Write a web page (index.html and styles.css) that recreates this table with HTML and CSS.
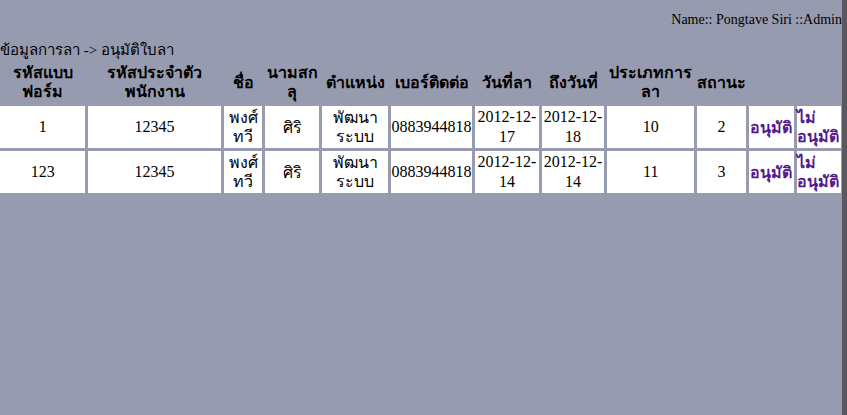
FILE: index.html
```html
<!DOCTYPE html>
<html>
<head>
<meta charset="utf-8">
<link rel="stylesheet" href="styles.css">
</head>
<body>
<div class="page">
  <div class="main">
    <div class="user">Name:: Pongtave Siri ::Admin</div>
    <div class="crumb">ข้อมูลการลา -&gt; อนุมัติใบลา</div>
    <table class="grid">
      <thead>
        <tr>
          <th class="c1">รหัสแบบ<br>ฟอร์ม</th>
          <th class="c2">รหัสประจำตัว<br>พนักงาน</th>
          <th class="c3">ชื่อ</th>
          <th class="c4">นามสก<br>ลุ</th>
          <th class="c5">ตำแหน่ง</th>
          <th class="c6">เบอร์ติดต่อ</th>
          <th class="c7">วันที่ลา</th>
          <th class="c8">ถึงวันที่</th>
          <th class="c9">ประเภทการ<br>ลา</th>
          <th class="c10">สถานะ</th>
          <th class="c11"></th>
          <th class="c12"></th>
        </tr>
      </thead>
      <tbody>
        <tr>
          <td>1</td>
          <td>12345</td>
          <td class="th">พงศ์<br>ทวี</td>
          <td class="th">ศิริ</td>
          <td class="th">พัฒนา<br>ระบบ</td>
          <td>0883944818</td>
          <td>2012-12-<br>17</td>
          <td>2012-12-<br>18</td>
          <td>10</td>
          <td>2</td>
          <td class="act"><a href="#">อนุมัติ</a></td>
          <td class="act left"><a href="#">ไม่<br>อนุมัติ</a></td>
        </tr>
        <tr>
          <td>123</td>
          <td>12345</td>
          <td class="th">พงศ์<br>ทวี</td>
          <td class="th">ศิริ</td>
          <td class="th">พัฒนา<br>ระบบ</td>
          <td>0883944818</td>
          <td>2012-12-<br>14</td>
          <td>2012-12-<br>14</td>
          <td>11</td>
          <td>3</td>
          <td class="act"><a href="#">อนุมัติ</a></td>
          <td class="act left"><a href="#">ไม่<br>อนุมัติ</a></td>
        </tr>
      </tbody>
    </table>
  </div>
  <div class="edge"></div>
</div>
</body>
</html>
```
FILE: styles.css
```css
html, body {
  margin: 0;
  padding: 0;
  height: 100%;
}
body {
  background: #979bb0;
  font-family: "Liberation Serif", "Noto Sans", "DejaVu Sans", serif;
  font-size: 16px;
  color: #000;
}
.page {
  display: flex;
  height: 100%;
}
.main {
  flex: 1;
  min-width: 0;
}
.edge {
  width: 5px;
  background: #58585e;
}
.user {
  text-align: right;
  font-size: 14px;
  padding-top: 12px;
  height: 28px;
  line-height: 16px;
}
.crumb {
  font-size: 15px;
  line-height: 20px;
  height: 20px;
}
.grid {
  border-collapse: separate;
  border-spacing: 3px;
  margin: -1px -3px 0 -3px;
  width: calc(100% + 5px);
}
.grid th {
  font-size: 16px;
  font-weight: bold;
  line-height: 19px;
  height: 38px;
  padding: 1px 0 2px;
  vertical-align: middle;
}
.grid td {
  background: #fff;
  text-align: center;
  vertical-align: middle;
  height: 40px;
  padding: 1px 0;
  line-height: 20px;
}
.grid td.th { font-size: 16px; line-height: 19px; }
.grid td.act { font-weight: bold; font-size: 16px; line-height: 19px; }
.grid td.left { text-align: left; }
.grid a { color: #551a8b; text-decoration: none; }
.c1 { width: 86px; }
.c2 { width: 133px; }
.c3 { width: 39px; }
.c4 { width: 54px; }
.c5 { width: 66px; }
.c6 { width: 81px; }
.c7 { width: 64px; }
.c8 { width: 63px; }
.c9 { width: 87px; }
.c10 { width: 46px; }
.c11 { width: 45px; }
.c12 { width: 44px; }
```
